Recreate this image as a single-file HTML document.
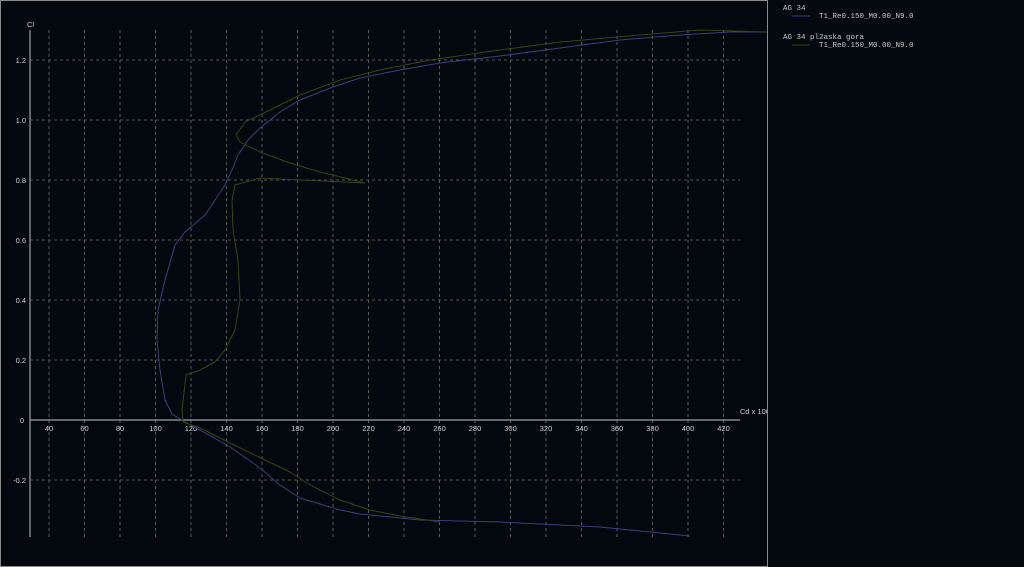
<!DOCTYPE html>
<html><head><style>
body{margin:0;width:1024px;height:567px;background:#020a10;overflow:hidden;font-family:"Liberation Sans",sans-serif}
svg{position:absolute;left:0;top:0}
.l{position:absolute;font-family:"Liberation Mono",monospace;font-size:7.5px;line-height:8px;color:#c8c8c8}
</style></head><body>
<svg width="1024" height="567">
<defs><clipPath id="c"><rect x="0" y="0" width="767" height="567"/></clipPath></defs>
<rect x="0.5" y="0.5" width="767" height="566" fill="#02080d" stroke="#8a8a8a"/>
<g stroke="#6f6f6f" stroke-dasharray="3,3" stroke-width="0.8">
<line x1="49" y1="30" x2="49" y2="537"/><line x1="84.5" y1="30" x2="84.5" y2="537"/><line x1="120" y1="30" x2="120" y2="537"/><line x1="155.5" y1="30" x2="155.5" y2="537"/><line x1="191" y1="30" x2="191" y2="537"/><line x1="226.5" y1="30" x2="226.5" y2="537"/><line x1="262" y1="30" x2="262" y2="537"/><line x1="297.5" y1="30" x2="297.5" y2="537"/><line x1="333" y1="30" x2="333" y2="537"/><line x1="368.5" y1="30" x2="368.5" y2="537"/><line x1="404" y1="30" x2="404" y2="537"/><line x1="439.5" y1="30" x2="439.5" y2="537"/><line x1="475" y1="30" x2="475" y2="537"/><line x1="510.5" y1="30" x2="510.5" y2="537"/><line x1="546" y1="30" x2="546" y2="537"/><line x1="581.5" y1="30" x2="581.5" y2="537"/><line x1="617" y1="30" x2="617" y2="537"/><line x1="652.5" y1="30" x2="652.5" y2="537"/><line x1="688" y1="30" x2="688" y2="537"/><line x1="723.5" y1="30" x2="723.5" y2="537"/>
<line x1="30" y1="60" x2="740" y2="60"/><line x1="30" y1="120" x2="740" y2="120"/><line x1="30" y1="180" x2="740" y2="180"/><line x1="30" y1="240" x2="740" y2="240"/><line x1="30" y1="300" x2="740" y2="300"/><line x1="30" y1="360" x2="740" y2="360"/><line x1="30" y1="480" x2="740" y2="480"/>
</g>
<line x1="30" y1="30" x2="30" y2="537" stroke="#a0a0a0" stroke-width="1.2"/>
<line x1="30" y1="420" x2="740" y2="420" stroke="#a0a0a0" stroke-width="1.2"/>
<g font-family="Liberation Sans" font-size="7.5" fill="#d0d0d0">
<text x="26" y="63" text-anchor="end">1.2</text><text x="26" y="123" text-anchor="end">1.0</text><text x="26" y="183" text-anchor="end">0.8</text><text x="26" y="243" text-anchor="end">0.6</text><text x="26" y="303" text-anchor="end">0.4</text><text x="26" y="363" text-anchor="end">0.2</text><text x="24" y="423" text-anchor="end">0</text><text x="26" y="483" text-anchor="end">-0.2</text>
<text x="27" y="27">Cl</text><text x="740" y="414" clip-path="url(#c)">Cd x 1000</text>
<g text-anchor="middle"><text x="49" y="431">40</text><text x="84.5" y="431">60</text><text x="120" y="431">80</text><text x="155.5" y="431">100</text><text x="191" y="431">120</text><text x="226.5" y="431">140</text><text x="262" y="431">160</text><text x="297.5" y="431">180</text><text x="333" y="431">200</text><text x="368.5" y="431">220</text><text x="404" y="431">240</text><text x="439.5" y="431">260</text><text x="475" y="431">280</text><text x="510.5" y="431">300</text><text x="546" y="431">320</text><text x="581.5" y="431">340</text><text x="617" y="431">360</text><text x="652.5" y="431">380</text><text x="688" y="431">400</text><text x="723.5" y="431">420</text></g>
</g>
<polyline fill="none" stroke="#3a3f7a" stroke-width="1" points="690,536 650,532 600,527 500,522 420,520 360,514 340,510 300,498 280,485 260,468 230,447 200,430 185,422 172,414 165,400 160,370 157,340 158,310 165,280 175,245 185,232 205,215 215,200 225,185 232,170 238,155 248,140 260,128 280,112 300,100 330,88 360,78 400,70 440,63 500,56 560,48 620,40 680,35 730,32 767,32"/>
<polyline fill="none" stroke="#34441a" stroke-width="1" points="440,522 400,516 370,510 340,500 310,485 290,472 265,460 230,443 200,428 183,422 182,410 186,375 200,370 215,362 225,350 235,330 240,300 238,260 233,230 232,200 235,185 260,178 300,180 365,183 320,172 290,163 260,152 240,142 236,135 245,122 270,110 300,95 340,80 380,70 430,60 500,50 560,42 640,35 700,30 767,32"/>
<line x1="792" y1="16" x2="810" y2="16" stroke="#3a3f7a"/>
<line x1="792" y1="45" x2="810" y2="45" stroke="#34441a"/>
</svg>
<div class="l" style="left:783px;top:5px">AG 34</div>
<div class="l" style="left:819px;top:13px">T1_Re0.150_M0.00_N9.0</div>
<div class="l" style="left:783px;top:34px">AG 34 pl2aska gora</div>
<div class="l" style="left:819px;top:42px">T1_Re0.150_M0.00_N9.0</div>
</body></html>
